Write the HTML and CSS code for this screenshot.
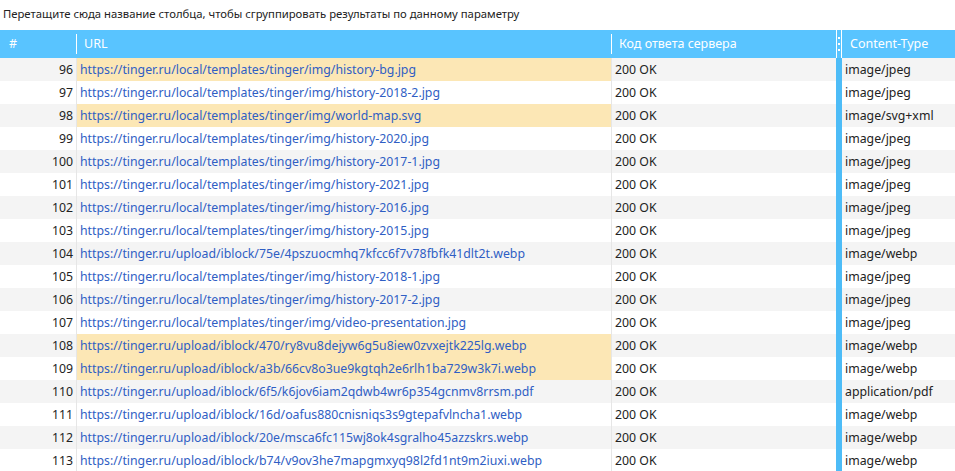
FILE: index.html
```html
<!DOCTYPE html>
<html lang="ru">
<head>
    <meta charset="UTF-8">
    <title>Изображения</title>
    <link rel="stylesheet" href="styles.css">
</head>
<body>
    <div class="group-panel">Перетащите сюда название столбца, чтобы сгруппировать результаты по данному параметру</div>

    <div class="grid">
        <div class="row head">
            <div class="cell num">#</div>
            <div class="cell url">URL</div>
            <div class="cell code">Код ответа сервера</div>
            <div class="splitter"><span></span><span></span><span></span></div>
            <div class="cell type">Content-Type</div>
        </div>

        <div class="row"><div class="cell num">96</div><div class="cell url mark"><a>https://tinger.ru/local/templates/tinger/img/history-bg.jpg</a></div><div class="cell code">200 OK</div><div class="splitter"></div><div class="cell type">image/jpeg</div></div>
        <div class="row"><div class="cell num">97</div><div class="cell url"><a>https://tinger.ru/local/templates/tinger/img/history-2018-2.jpg</a></div><div class="cell code">200 OK</div><div class="splitter"></div><div class="cell type">image/jpeg</div></div>
        <div class="row"><div class="cell num">98</div><div class="cell url mark"><a>https://tinger.ru/local/templates/tinger/img/world-map.svg</a></div><div class="cell code">200 OK</div><div class="splitter"></div><div class="cell type">image/svg+xml</div></div>
        <div class="row"><div class="cell num">99</div><div class="cell url"><a>https://tinger.ru/local/templates/tinger/img/history-2020.jpg</a></div><div class="cell code">200 OK</div><div class="splitter"></div><div class="cell type">image/jpeg</div></div>
        <div class="row"><div class="cell num">100</div><div class="cell url"><a>https://tinger.ru/local/templates/tinger/img/history-2017-1.jpg</a></div><div class="cell code">200 OK</div><div class="splitter"></div><div class="cell type">image/jpeg</div></div>
        <div class="row"><div class="cell num">101</div><div class="cell url"><a>https://tinger.ru/local/templates/tinger/img/history-2021.jpg</a></div><div class="cell code">200 OK</div><div class="splitter"></div><div class="cell type">image/jpeg</div></div>
        <div class="row"><div class="cell num">102</div><div class="cell url"><a>https://tinger.ru/local/templates/tinger/img/history-2016.jpg</a></div><div class="cell code">200 OK</div><div class="splitter"></div><div class="cell type">image/jpeg</div></div>
        <div class="row"><div class="cell num">103</div><div class="cell url"><a>https://tinger.ru/local/templates/tinger/img/history-2015.jpg</a></div><div class="cell code">200 OK</div><div class="splitter"></div><div class="cell type">image/jpeg</div></div>
        <div class="row"><div class="cell num">104</div><div class="cell url"><a>https://tinger.ru/upload/iblock/75e/4pszuocmhq7kfcc6f7v78fbfk41dlt2t.webp</a></div><div class="cell code">200 OK</div><div class="splitter"></div><div class="cell type">image/webp</div></div>
        <div class="row"><div class="cell num">105</div><div class="cell url"><a>https://tinger.ru/local/templates/tinger/img/history-2018-1.jpg</a></div><div class="cell code">200 OK</div><div class="splitter"></div><div class="cell type">image/jpeg</div></div>
        <div class="row"><div class="cell num">106</div><div class="cell url"><a>https://tinger.ru/local/templates/tinger/img/history-2017-2.jpg</a></div><div class="cell code">200 OK</div><div class="splitter"></div><div class="cell type">image/jpeg</div></div>
        <div class="row"><div class="cell num">107</div><div class="cell url"><a>https://tinger.ru/local/templates/tinger/img/video-presentation.jpg</a></div><div class="cell code">200 OK</div><div class="splitter"></div><div class="cell type">image/jpeg</div></div>
        <div class="row"><div class="cell num">108</div><div class="cell url mark"><a>https://tinger.ru/upload/iblock/470/ry8vu8dejyw6g5u8iew0zvxejtk225lg.webp</a></div><div class="cell code">200 OK</div><div class="splitter"></div><div class="cell type">image/webp</div></div>
        <div class="row"><div class="cell num">109</div><div class="cell url mark"><a>https://tinger.ru/upload/iblock/a3b/66cv8o3ue9kgtqh2e6rlh1ba729w3k7i.webp</a></div><div class="cell code">200 OK</div><div class="splitter"></div><div class="cell type">image/webp</div></div>
        <div class="row"><div class="cell num">110</div><div class="cell url"><a>https://tinger.ru/upload/iblock/6f5/k6jov6iam2qdwb4wr6p354gcnmv8rrsm.pdf</a></div><div class="cell code">200 OK</div><div class="splitter"></div><div class="cell type">application/pdf</div></div>
        <div class="row"><div class="cell num">111</div><div class="cell url"><a>https://tinger.ru/upload/iblock/16d/oafus880cnisniqs3s9gtepafvlncha1.webp</a></div><div class="cell code">200 OK</div><div class="splitter"></div><div class="cell type">image/webp</div></div>
        <div class="row"><div class="cell num">112</div><div class="cell url"><a>https://tinger.ru/upload/iblock/20e/msca6fc115wj8ok4sgralho45azzskrs.webp</a></div><div class="cell code">200 OK</div><div class="splitter"></div><div class="cell type">image/webp</div></div>
        <div class="row"><div class="cell num">113</div><div class="cell url"><a>https://tinger.ru/upload/iblock/b74/v9ov3he7mapgmxyq98l2fd1nt9m2iuxi.webp</a></div><div class="cell code">200 OK</div><div class="splitter"></div><div class="cell type">image/webp</div></div>
    </div>
</body>
</html>
```

FILE: styles.css
```css
body { margin: 0; font-family: "Noto Sans", sans-serif; font-size: 12.3px; color: #222; background: #fff; overflow: hidden; }

.group-panel { height: 30px; line-height: 28px; padding-left: 3px; font-size: 11.3px; color: #222; }

.grid { width: 955px; }
.row { display: grid; grid-template-columns: 76px 535px 225px 6px 113px; height: 23px; }
.row:nth-child(even) { background: #f4f4f4; }
.cell { line-height: 24px; white-space: nowrap; overflow: hidden; border-left: 1px solid #e6e6e6; padding-left: 3px; }
.cell.num { border-left: none; text-align: right; padding: 0 3px 0 0; }
.cell.url a { color: #2f5ec4; }
.cell.mark { background: #fce7b5; }
.cell.type { border-left: none; padding-left: 3px; }

.splitter { background: #4dbcf7; }

.row.head { height: 28px; background: #59c4ff; color: #fff; font-size: 12.5px; }
.row.head .cell { line-height: 28px; border-left: none; position: relative; padding-left: 8px; }
.row.head .cell.num { text-align: left; padding-left: 9px; }
.row.head .cell.url::before,
.row.head .cell.code::before { content: ""; position: absolute; left: 0; top: 4px; bottom: 4px; border-left: 1px solid #fff; }
.row.head .splitter { background: #59c4ff; border-left: 1px solid #fff; border-right: 1px solid #fff; display: flex; flex-direction: column; align-items: center; gap: 4px; padding-top: 7px; }
.row.head .splitter span { width: 2px; height: 2px; background: #fff; }
```
